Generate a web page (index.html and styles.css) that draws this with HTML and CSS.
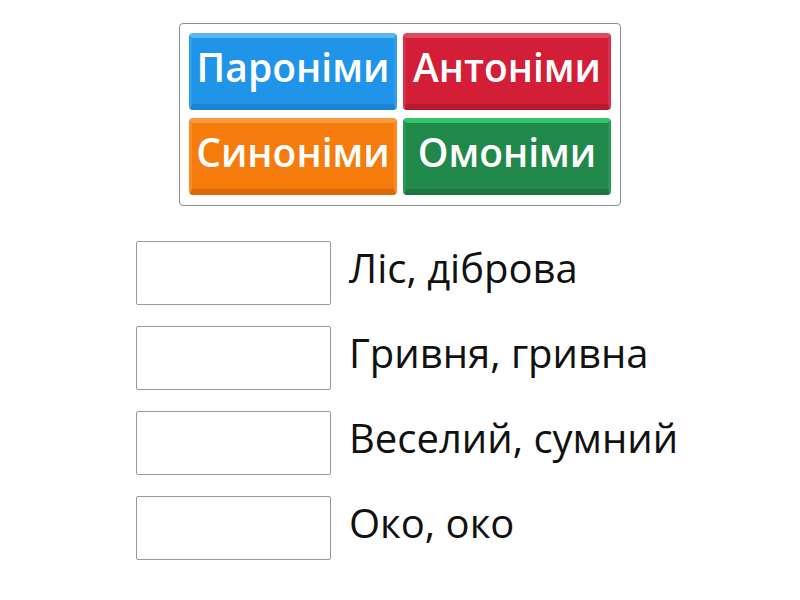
FILE: index.html
```html
<!DOCTYPE html>
<html lang="uk">
<head>
    <meta charset="UTF-8">
    <meta name="viewport" content="width=device-width, initial-scale=1.0">
    <title>Згрупуйте слова</title>
    <link rel="stylesheet" href="styles.css">
</head>
<body>
    <div class="bank">
        <div class="tile blue">Пароніми</div>
        <div class="tile red">Антоніми</div>
        <div class="tile orange">Синоніми</div>
        <div class="tile green">Омоніми</div>
    </div>
    <ul class="pairs">
        <li><span class="slot"></span><span class="word">Ліс, діброва</span></li>
        <li><span class="slot"></span><span class="word">Гривня, гривна</span></li>
        <li><span class="slot"></span><span class="word">Веселий, сумний</span></li>
        <li><span class="slot"></span><span class="word">Око, око</span></li>
    </ul>
</body>
</html>
```

FILE: styles.css
```css
* {
    margin: 0;
    padding: 0;
    box-sizing: border-box;
}
body {
    background: #fff;
    font-family: "Open Sans", sans-serif;
    width: 800px;
    height: 600px;
    overflow: hidden;
}
.bank {
    width: 442px;
    margin: 23px auto 0;
    padding: 9px 9px 10px;
    border: 1px solid #8c8c8c;
    border-radius: 4px;
    display: grid;
    grid-template-columns: 208px 208px;
    grid-auto-rows: 77px;
    column-gap: 6px;
    row-gap: 8px;
}
.tile {
    display: flex;
    align-items: center;
    justify-content: center;
    padding-bottom: 10px;
    border-radius: 4px;
    border-style: solid;
    border-width: 5px 3px 6px;
    color: #fff;
    font-size: 39px;
    font-weight: 600;
    line-height: 1;
    white-space: nowrap;
}
.blue {
    background: #1f94e8;
    border-color: #5ab5f2 #2ea0ee #1a84d2;
}
.red {
    background: #d21e36;
    border-color: #e04a5e #d93049 #b71a2e;
}
.orange {
    background: #f57b0c;
    border-color: #fb9a3e #f98a24 #db6a06;
}
.green {
    background: #20894a;
    border-color: #32c46b #249a52 #1a773f;
}
.pairs {
    list-style: none;
    margin: 35px 0 0 136px;
    display: flex;
    flex-direction: column;
    gap: 21px;
}
.pairs li {
    display: flex;
    align-items: center;
    gap: 18px;
}
.slot {
    width: 195px;
    height: 64px;
    border: 1px solid #9a9a9a;
    border-radius: 2px;
    background: #fff;
}
.word {
    margin-bottom: 10px;
    font-size: 40px;
    line-height: 1;
    color: #111;
}
```
